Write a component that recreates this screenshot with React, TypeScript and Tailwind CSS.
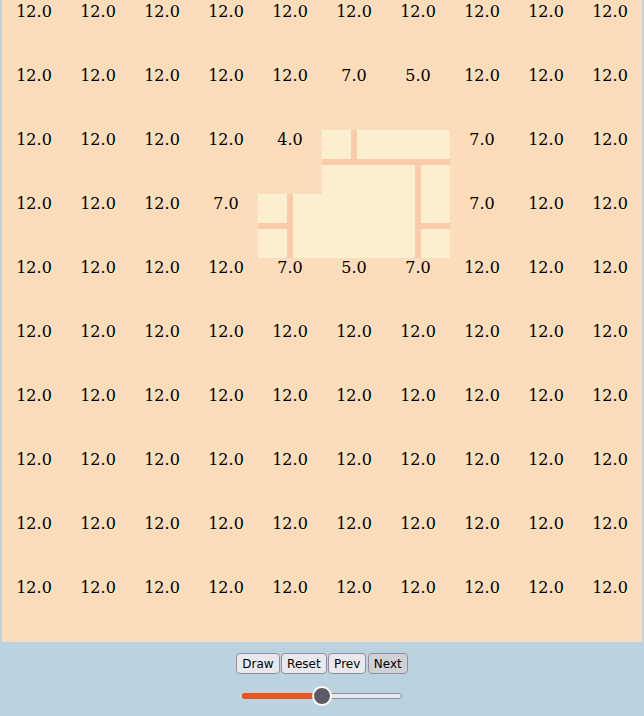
import React from "react";

const grid: (string | null)[][] = [
  ["12.0","12.0","12.0","12.0","12.0","12.0","12.0","12.0","12.0","12.0"],
  ["12.0","12.0","12.0","12.0","12.0","7.0","5.0","12.0","12.0","12.0"],
  ["12.0","12.0","12.0","12.0","4.0",null,null,"7.0","12.0","12.0"],
  ["12.0","12.0","12.0","7.0",null,null,null,"7.0","12.0","12.0"],
  ["12.0","12.0","12.0","12.0","7.0","5.0","7.0","12.0","12.0","12.0"],
  ...Array.from({ length: 5 }, () => Array.from({ length: 10 }, () => "12.0")),
];

export default function App() {
  return (
    <div className="w-[644px] h-[716px] bg-[#bbd3e1] flex flex-col overflow-hidden">
      <div className="ml-[2px] w-[640px] h-[642px] bg-[#fbdcbb] pt-[2px]">
        <div className="relative grid grid-cols-[repeat(10,64px)] grid-rows-[repeat(10,64px)]">
          {grid.flatMap((row, r) =>
            row.map((v, c) => (
              <div
                key={`${r}-${c}`}
                className={`flex justify-center ${v === null ? "bg-[#fcefcf]" : ""}`}
              >
                {v !== null && (
                  <span className="text-[16px] leading-[18px] mt-[1px] text-black [font-family:'DejaVu_Serif',serif]">
                    {v}
                  </span>
                )}
              </div>
            ))
          )}
          <svg
            className="absolute left-0 top-0 pointer-events-none"
            width="640"
            height="640"
            viewBox="0 0 640 640"
          >
            <g stroke="#f9cbab" strokeWidth="6" strokeLinecap="butt">
              <line x1="352" y1="128" x2="352" y2="163" />
              <line x1="320" y1="160" x2="448" y2="160" />
              <line x1="416" y1="157" x2="416" y2="256" />
              <line x1="416" y1="224" x2="448" y2="224" />
              <line x1="288" y1="192" x2="288" y2="256" />
              <line x1="256" y1="224" x2="291" y2="224" />
            </g>
          </svg>
        </div>
      </div>
      <div className="flex flex-col items-center">
        <div className="flex gap-[1.5px] mt-[11px] [font-family:'DejaVu_Sans',sans-serif] text-[12px] leading-[16px] text-black">
          {["Draw", "Reset", "Prev", "Next"].map((t) => (
            <button
              key={t}
              className={`px-[5px] py-[1.5px] border border-[#8f8f9d] rounded-[4px] ${
                t === "Next" ? "bg-[#d0d0d7]" : "bg-[#e9e9ed]"
              }`}
            >
              {t}
            </button>
          ))}
        </div>
        <div className="relative w-[160px] h-[20px] mt-[12px]">
          <div className="absolute left-0 right-0 top-[7px] h-[6px] rounded-full bg-[#e9e9ed] border border-[#8f8f9d]" />
          <div className="absolute left-0 w-[80px] top-[7px] h-[6px] rounded-full bg-[#e8541c]" />
          <div className="absolute left-[70px] top-0 w-[20px] h-[20px] rounded-full bg-[#5b5b66] border-2 border-white" />
        </div>
      </div>
    </div>
  );
}
